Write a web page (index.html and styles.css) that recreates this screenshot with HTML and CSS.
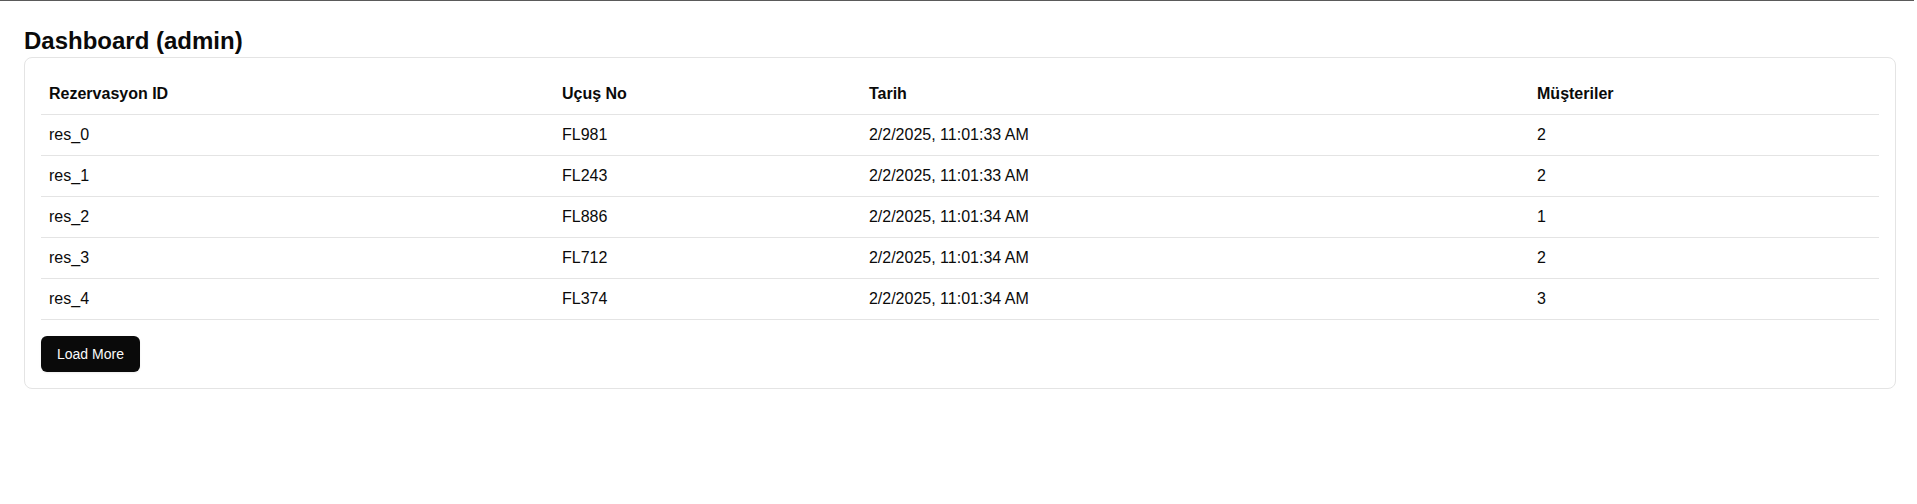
FILE: index.html
```html
<!DOCTYPE html>
<html lang="tr">
<head>
<meta charset="utf-8">
<title>Dashboard (admin)</title>
<link rel="stylesheet" href="styles.css">
</head>
<body>
<div class="topline"></div>
<main class="page">
  <h1 class="title">Dashboard (admin)</h1>
  <section class="card">
    <table class="table">
      <colgroup>
        <col class="c1"><col class="c2"><col class="c3"><col class="c4">
      </colgroup>
      <thead>
        <tr><th>Rezervasyon ID</th><th>Uçuş No</th><th>Tarih</th><th>Müşteriler</th></tr>
      </thead>
      <tbody>
        <tr><td>res_0</td><td>FL981</td><td>2/2/2025, 11:01:33 AM</td><td>2</td></tr>
        <tr><td>res_1</td><td>FL243</td><td>2/2/2025, 11:01:33 AM</td><td>2</td></tr>
        <tr><td>res_2</td><td>FL886</td><td>2/2/2025, 11:01:34 AM</td><td>1</td></tr>
        <tr><td>res_3</td><td>FL712</td><td>2/2/2025, 11:01:34 AM</td><td>2</td></tr>
        <tr><td>res_4</td><td>FL374</td><td>2/2/2025, 11:01:34 AM</td><td>3</td></tr>
      </tbody>
    </table>
    <button class="btn" type="button">Load More</button>
  </section>
</main>
</body>
</html>
```
FILE: styles.css
```css
* { box-sizing: border-box; }
html, body { margin: 0; padding: 0; background: #fff; }
body {
  font-family: "Liberation Sans", Arial, sans-serif;
  color: #0a0a0a;
}
.topline {
  height: 1px;
  background: #5a5a5a;
  margin-right: 3px;
}
.page {
  padding: 24px 21px 24px 24px;
}
.title {
  margin: 0;
  font-size: 24px;
  line-height: 32px;
  font-weight: 700;
}
.card {
  border: 1px solid #e4e4e4;
  border-radius: 8px;
  padding: 16px;
  background: #fff;
}
.table {
  width: 100%;
  border-collapse: collapse;
  font-size: 16px;
}
.c1 { width: 27.91%; }
.c2 { width: 16.7%; }
.c3 { width: 36.35%; }
.c4 { width: 19.04%; }
.table th,
.table td {
  text-align: left;
  padding: 8px;
  line-height: 24px;
  height: 41px;
  border-bottom: 1px solid #e4e4e4;
  vertical-align: middle;
}
.table th {
  font-weight: 700;
  font-size: 16px;
  height: 40px;
}
.btn {
  margin-top: 16px;
  height: 36px;
  padding: 0 16px;
  border: 0;
  border-radius: 6px;
  background: #0a0a0a;
  color: #fafafa;
  font-family: "Liberation Sans", Arial, sans-serif;
  font-size: 14px;
  box-shadow: 0 1px 2px rgba(0,0,0,0.08);
  display: block;
}
```
